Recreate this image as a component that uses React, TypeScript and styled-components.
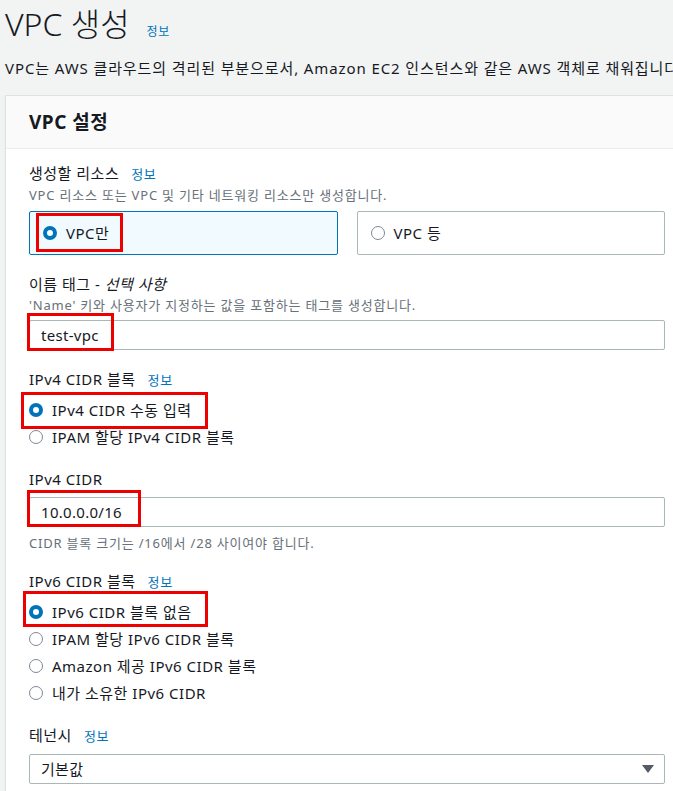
import styled, { createGlobalStyle } from "styled-components";

const GlobalStyle = createGlobalStyle`
  html, body {
    margin: 0;
    padding: 0;
    background-color: #f2f3f3;
  }

  body {
    font-family: "Noto Sans", "Noto Sans CJK KR", sans-serif;
    color: #16191f;
    overflow: hidden;
  }
`;

const Page = styled.main`
  width: 100%;
  padding: 4px 0 0 5px;
  box-sizing: border-box;
  overflow: hidden;
`;

const TitleRow = styled.div`
  display: flex;
  align-items: baseline;
  gap: 17px;
  height: 40px;
`;

const PageTitle = styled.h1`
  margin: 0;
  font-size: 32px;
  font-weight: 300;
  line-height: 40px;
`;

const InfoLink = styled.a<{ $size?: number }>`
  color: #0073bb;
  font-size: ${(props) => props.$size ?? 13}px;
  font-weight: 400;
  letter-spacing: 0.6px;
  text-decoration: none;
  cursor: pointer;
`;

const Lead = styled.p`
  margin: 14px 0 0;
  font-size: 15px;
  line-height: 20px;
  letter-spacing: 0.9px;
  white-space: nowrap;
`;

const Card = styled.section`
  margin-top: 17px;
  width: 720px;
  background-color: #ffffff;
  border: 1px solid #dde2e3;
  border-right: none;
  box-shadow: 0 1px 1px rgba(0, 28, 36, 0.15);
`;

const CardHeader = styled.header`
  height: 52px;
  display: flex;
  align-items: center;
  padding-left: 23px;
  background-color: #fafafa;
  border-bottom: 1px solid #eaeded;
`;

const CardTitle = styled.h2`
  margin: 0;
  font-size: 19px;
  font-weight: 700;
  line-height: 22px;
  letter-spacing: 0.5px;
`;

const CardBody = styled.div`
  width: 636px;
  padding: 14px 0 20px 23px;
  display: flex;
  flex-direction: column;
  gap: 19px;
`;

const Field = styled.div`
  display: flex;
  flex-direction: column;
`;

const LabelRow = styled.div`
  display: flex;
  align-items: baseline;
  gap: 12px;
  font-size: 15px;
  line-height: 20px;
  letter-spacing: 0.5px;
`;

const Optional = styled.i`
  font-style: italic;
`;

const Description = styled.div<{ $gap?: number }>`
  margin-top: ${(props) => props.$gap ?? 2}px;
  font-size: 13px;
  line-height: 18px;
  letter-spacing: 0.8px;
  color: #687078;
`;

const Tiles = styled.div`
  margin-top: 7px;
  display: grid;
  grid-template-columns: 1fr 1fr;
  gap: 19px;
`;

const Tile = styled.div<{ $selected?: boolean }>`
  height: 44px;
  box-sizing: border-box;
  display: flex;
  align-items: center;
  padding-left: 13px;
  border: 1px solid ${(props) => (props.$selected ? "#0073bb" : "#aab7b8")};
  border-radius: 2px;
  background-color: ${(props) => (props.$selected ? "#f1faff" : "#ffffff")};
`;

const RadioList = styled.div`
  margin-top: 6px;
  display: flex;
  flex-direction: column;
`;

const RadioRow = styled.label`
  height: 27px;
  display: flex;
  align-items: center;
  gap: 9px;
  font-size: 15px;
  line-height: 20px;
  letter-spacing: 0.5px;
  cursor: pointer;
`;

const RadioDot = styled.span<{ $checked?: boolean }>`
  width: 14px;
  height: 14px;
  box-sizing: border-box;
  border-radius: 50%;
  flex-shrink: 0;
  background-color: #ffffff;
  border: ${(props) => (props.$checked ? "4px solid #0073bb" : "1.5px solid #7d8998")};
`;

const Input = styled.div<{ $gap?: number }>`
  margin-top: ${(props) => props.$gap ?? 6}px;
  height: 30px;
  box-sizing: border-box;
  display: flex;
  align-items: center;
  justify-content: space-between;
  padding: 0 10px 0 11px;
  border: 1px solid #aab7b8;
  border-radius: 2px;
  background-color: #ffffff;
  font-size: 15px;
  line-height: 20px;
  letter-spacing: 0.3px;
`;

const Caret = styled.span`
  width: 0;
  height: 0;
  border-left: 6px solid transparent;
  border-right: 6px solid transparent;
  border-top: 8px solid #545b64;
`;

const Highlight = styled.span<{ $t: number; $r: number; $b: number; $l: number }>`
  position: relative;
  display: inline-flex;
  align-items: center;
  gap: inherit;

  &::after {
    content: "";
    position: absolute;
    top: ${(props) => -props.$t}px;
    right: ${(props) => -props.$r}px;
    bottom: ${(props) => -props.$b}px;
    left: ${(props) => -props.$l}px;
    border: 3px solid #ec0000;
    pointer-events: none;
  }
`;

function Radio({ checked, children }: { checked?: boolean; children: React.ReactNode }) {
  return (
    <RadioRow>
      <RadioDot $checked={checked} />
      {children}
    </RadioRow>
  );
}

export default function App() {
  return (
    <>
      <GlobalStyle />
      <Page>
        <TitleRow>
          <PageTitle>VPC 생성</PageTitle>
          <InfoLink $size={12}>정보</InfoLink>
        </TitleRow>
        <Lead>
          VPC는 AWS 클라우드의 격리된 부분으로서, Amazon EC2 인스턴스와 같은 AWS 객체로 채워집니다.
        </Lead>

        <Card>
          <CardHeader>
            <CardTitle>VPC 설정</CardTitle>
          </CardHeader>
          <CardBody>
            <Field>
              <LabelRow>
                생성할 리소스 <InfoLink>정보</InfoLink>
              </LabelRow>
              <Description>VPC 리소스 또는 VPC 및 기타 네트워킹 리소스만 생성합니다.</Description>
              <Tiles>
                <Tile $selected>
                  <Highlight $t={7} $r={14} $b={5} $l={7}>
                    <RadioRow as="span">
                      <RadioDot $checked />
                      VPC만
                    </RadioRow>
                  </Highlight>
                </Tile>
                <Tile>
                  <RadioRow as="span">
                    <RadioDot />
                    VPC 등
                  </RadioRow>
                </Tile>
              </Tiles>
            </Field>

            <Field>
              <LabelRow>
                <span>
                  이름 태그 - <Optional>선택 사항</Optional>
                </span>
              </LabelRow>
              <Description>'Name' 키와 사용자가 지정하는 값을 포함하는 태그를 생성합니다.</Description>
              <Input>
                <Highlight $t={12} $r={15} $b={6} $l={14}>test-vpc</Highlight>
              </Input>
            </Field>

            <Field>
              <LabelRow>
                IPv4 CIDR 블록 <InfoLink>정보</InfoLink>
              </LabelRow>
              <RadioList>
                <Radio checked>
                  <Highlight $t={8} $r={16} $b={9} $l={31}>
                    IPv4 CIDR 수동 입력
                  </Highlight>
                </Radio>
                <Radio>IPAM 할당 IPv4 CIDR 블록</Radio>
              </RadioList>
            </Field>

            <Field>
              <LabelRow>IPv4 CIDR</LabelRow>
              <Input $gap={8}>
                <Highlight $t={12} $r={19} $b={5} $l={14}>10.0.0.0/16</Highlight>
              </Input>
              <Description $gap={7}>CIDR 블록 크기는 /16에서 /28 사이여야 합니다.</Description>
            </Field>

            <Field>
              <LabelRow>
                IPv6 CIDR 블록 <InfoLink>정보</InfoLink>
              </LabelRow>
              <RadioList>
                <Radio checked>
                  <Highlight $t={11} $r={16} $b={5} $l={29}>
                    IPv6 CIDR 블록 없음
                  </Highlight>
                </Radio>
                <Radio>IPAM 할당 IPv6 CIDR 블록</Radio>
                <Radio>Amazon 제공 IPv6 CIDR 블록</Radio>
                <Radio>내가 소유한 IPv6 CIDR</Radio>
              </RadioList>
            </Field>

            <Field>
              <LabelRow>
                테넌시 <InfoLink>정보</InfoLink>
              </LabelRow>
              <Input $gap={8}>
                기본값
                <Caret />
              </Input>
            </Field>
          </CardBody>
        </Card>
      </Page>
    </>
  );
}
